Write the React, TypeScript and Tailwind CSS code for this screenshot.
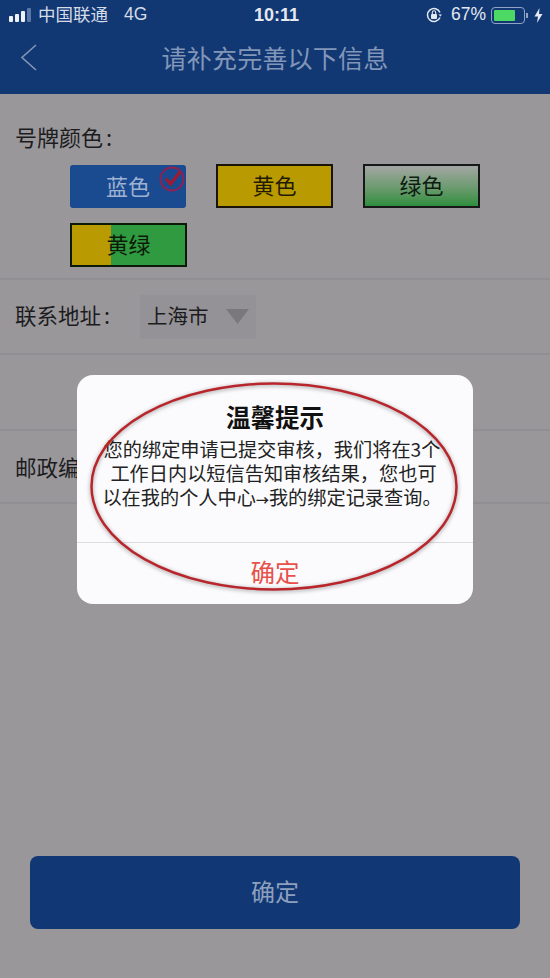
import React from "react";

function Plate({ label, cls }: { label: string; cls: string }) {
  return (
    <div className={`w-[117px] h-[44px] flex items-center justify-center pb-[4px] text-[22px] leading-none ${cls}`}>
      {label}
    </div>
  );
}

export default function App() {
  return (
    <div className="relative w-[550px] h-[978px] overflow-hidden bg-[#99979a] flex flex-col font-['Noto_Sans_CJK_SC',sans-serif]">
      {/* Header */}
      <div className="h-[94px] shrink-0 bg-[#123874] flex flex-col">
        <div className="h-[30px] relative flex items-center justify-between pl-[9px] pr-[7px]">
          <div className="flex items-center">
            <div className="flex items-end gap-[2px] mr-[7px]">
              <div className="w-[4px] h-[6px] rounded-[1px] bg-[#eef1f6]" />
              <div className="w-[4px] h-[8px] rounded-[1px] bg-[#eef1f6]" />
              <div className="w-[4px] h-[11px] rounded-[1px] bg-[#eef1f6]" />
              <div className="w-[4px] h-[14px] rounded-[1px] bg-[#5a76a6]" />
            </div>
            <span className="text-[17.5px] leading-none text-[#d5dce8] pb-[2px]">中国联通</span>
            <span className="ml-[16px] text-[17.5px] leading-none text-[#d5dce8] font-['Liberation_Sans',sans-serif]">4G</span>
          </div>
          <div className="flex items-center text-[#e4e8f0]">
            <svg width="18" height="18" viewBox="0 0 18 18" className="mr-[8px]" fill="none">
              <path d="M15 6.5A6.5 6.5 0 1 0 15 11.5" stroke="#e4e8f0" strokeWidth="1.5" />
              <path d="M13.5 8.5h3.5l-1.7 2z" fill="#e4e8f0" />
              <rect x="6" y="8" width="6" height="5" rx="1" fill="#e4e8f0" />
              <path d="M7.3 8V6.5a1.7 1.7 0 0 1 3.4 0V8" stroke="#e4e8f0" strokeWidth="1.1" />
            </svg>
            <span className="text-[17.5px] leading-none font-['Liberation_Sans',sans-serif] mr-[5px]">67%</span>
            <div className="w-[34px] h-[17px] rounded-[4px] border border-[#8fa3c4] p-[2px] mr-[1px]">
              <div className="w-[21px] h-full rounded-[1px] bg-[#4cd964]" />
            </div>
            <div className="w-[2px] h-[5px] bg-[#8fa3c4] mr-[6px]" />
            <svg width="9" height="15" viewBox="0 0 9 15"><path d="M5.5 0 0.5 8.5H4L3 15 8.5 6H5z" fill="#e4e8f0" /></svg>
          </div>
          <span className="absolute left-[3px] right-0 top-[6px] text-center text-[18px] leading-[18px] font-semibold text-[#e4e8f0] font-['Liberation_Sans',sans-serif]">10:11</span>
        </div>
        <div className="flex-1 relative flex items-center justify-center pb-[8px]">
          <svg width="20" height="30" viewBox="0 0 20 30" className="absolute left-[19px] top-[13px]" fill="none">
            <path d="M17 2 3 14.5 17 27" stroke="#8296b8" strokeWidth="1.6" />
          </svg>
          <span className="text-[25px] leading-none text-[#8296b8] tracking-[0.2px] pb-[1px]">请补充完善以下信息</span>
        </div>
      </div>

      {/* Plate colour */}
      <div className="h-[186px] shrink-0 border-b-2 border-[#918f93] pl-[15px] pt-[28px]">
        <div className="text-[22px] leading-[28px] text-[#1c1c1e]">号牌颜色<span className="ml-[3px]">:</span></div>
        <div className="ml-[55px] mt-[14px] flex flex-wrap w-[440px] gap-x-[30px] gap-y-[15px]">
          <div className="relative w-[116px] h-[43px] rounded-[3px] bg-[#1a4a90] flex items-center justify-center pb-[3px] text-[22px] leading-none text-[#9fb2d2] mt-[1px]">
            蓝色
            <svg width="28" height="28" viewBox="0 0 28 28" className="absolute right-0 top-0" fill="none">
              <circle cx="14" cy="14" r="11.5" stroke="#93204f" strokeWidth="1.8" />
              <path d="M8 13.5 12.5 19 22 7" stroke="#a4192f" strokeWidth="3" />
            </svg>
          </div>
          <Plate label="黄色" cls="border-2 border-[#1a1408] bg-[#b99a00] text-[#221a04]" />
          <Plate label="绿色" cls="border-2 border-[#16181a] bg-gradient-to-b from-[#a3a6a3] to-[#2c8f3e] text-[#0e1c12]" />
          <div className="w-[117px] h-[44px] border-2 border-[#0c1a08] flex relative">
            <div className="w-[39px] bg-[#b99a00]" />
            <div className="flex-1 bg-[#2f9a3f]" />
            <span className="absolute inset-0 flex items-center justify-center pb-[4px] text-[22px] leading-none text-[#0e1a08]">黄绿</span>
          </div>
        </div>
      </div>

      {/* Address */}
      <div className="h-[75px] shrink-0 border-b-2 border-[#918f93] pl-[15px] flex items-center">
        <span className="text-[21.5px] text-[#1c1c1e] w-[125px] leading-none pb-[3px]">联系地址<span className="ml-[3px]">:</span></span>
        <div className="w-[116px] h-[44px] bg-[#949296] flex items-center pl-[7px] text-[20.5px] leading-none text-[#1c1c1e]">
          <span className="pb-[3px]">上海市</span>
          <svg width="23" height="15" viewBox="0 0 23 15" className="ml-[17px]"><path d="M0 0h23L11.5 15z" fill="#7a787c" /></svg>
        </div>
      </div>

      <div className="h-[76px] shrink-0 border-b-2 border-[#918f93]" />

      <div className="h-[73px] shrink-0 border-b-2 border-[#918f93] pl-[15px] flex items-center">
        <span className="text-[21.5px] leading-none text-[#1c1c1e]">邮政编码：</span>
      </div>

      {/* Bottom button */}
      <div className="mt-auto mb-[49px] ml-[30px] mr-[30px] h-[73px] rounded-[8px] bg-[#113875] flex items-center justify-center pb-[3px] text-[24px] leading-none text-[#8ea0bd]">
        确定
      </div>

      {/* Dialog */}
      <div className="absolute left-[77px] top-[375px] w-[396px] h-[229px] rounded-[16px] bg-[#fbfbfd] flex flex-col items-center overflow-hidden">
        <div className="mt-[29px] text-[24.5px] leading-[26px] font-bold text-[#111]">温馨提示</div>
        <div className="mt-[7px] w-[396px] pl-[22px] pr-[28px] text-[19.2px] leading-[24px] text-[#222] text-center whitespace-nowrap">
          <div>您的绑定申请已提交审核，我们将在3个</div>
          <div className="ml-[3px]">工作日内以短信告知审核结果，您也可</div>
          <div>以在我的个人中心<span className="text-[13px] font-bold">→</span>我的绑定记录查询。</div>
        </div>
        <div className="w-full h-px bg-[#dcdcde] mt-[30px]" />
        <div className="flex-1 w-full flex items-center justify-center text-[24.5px] leading-none text-[#e8504a] pb-[2px]">确定</div>
      </div>

      {/* Hand-drawn red ellipse over dialog */}
      <svg width="396" height="229" viewBox="0 0 396 229" className="absolute left-[77px] top-[375px] pointer-events-none drop-shadow-[0_1px_2px_rgba(0,0,0,0.4)]" fill="none">
        <ellipse cx="197" cy="111.5" rx="182.5" ry="103" stroke="#b8262c" strokeWidth="2.5" />
      </svg>
    </div>
  );
}
